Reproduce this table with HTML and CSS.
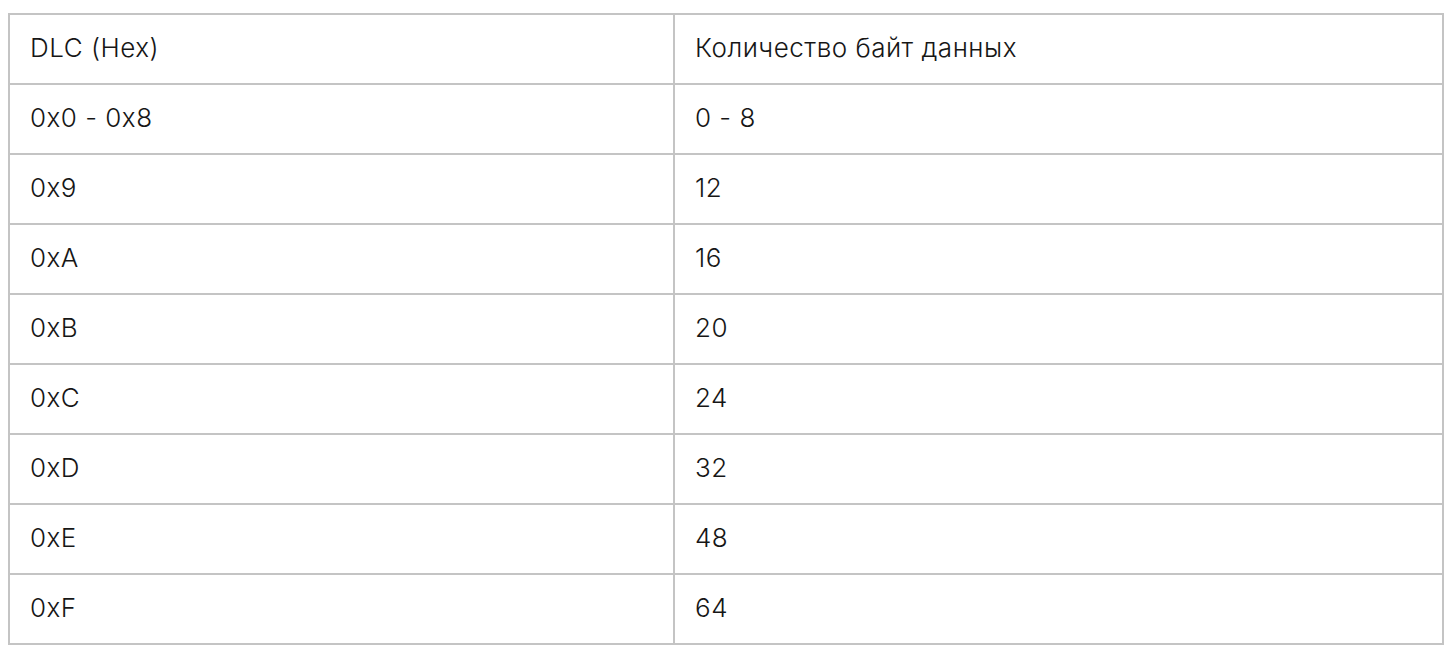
FILE: index.html
```html
<!DOCTYPE html>
<html lang="ru">
<head>
<meta charset="utf-8">
<link rel="stylesheet" href="styles.css">
</head>
<body>
<table class="dlc-table">
  <colgroup>
    <col class="col-dlc">
    <col class="col-bytes">
  </colgroup>
  <tbody>
    <tr><td>DLC (Hex)</td><td>Количество байт данных</td></tr>
    <tr><td>0x0 - 0x8</td><td>0 - 8</td></tr>
    <tr><td>0x9</td><td>12</td></tr>
    <tr><td>0xA</td><td>16</td></tr>
    <tr><td>0xB</td><td>20</td></tr>
    <tr><td>0xC</td><td>24</td></tr>
    <tr><td>0xD</td><td>32</td></tr>
    <tr><td>0xE</td><td>48</td></tr>
    <tr><td>0xF</td><td>64</td></tr>
  </tbody>
</table>
</body>
</html>
```
FILE: styles.css
```css
html, body {
  margin: 0;
  background: #fff;
}
body {
  padding: 13px 8px 0 8px;
  font-family: Inter, "Noto Sans", sans-serif;
  color: #161616;
}
.dlc-table {
  width: 100%;
  border-collapse: collapse;
  table-layout: fixed;
}
.col-dlc {
  width: 665px;
}
.dlc-table td {
  border: 2px solid #c4c4c4;
  height: 70px;
  box-sizing: border-box;
  padding: 0 20px 3px 20px;
  font-size: 26px;
  font-weight: 300;
  letter-spacing: 0.5px;
  vertical-align: middle;
  text-align: left;
}
```
